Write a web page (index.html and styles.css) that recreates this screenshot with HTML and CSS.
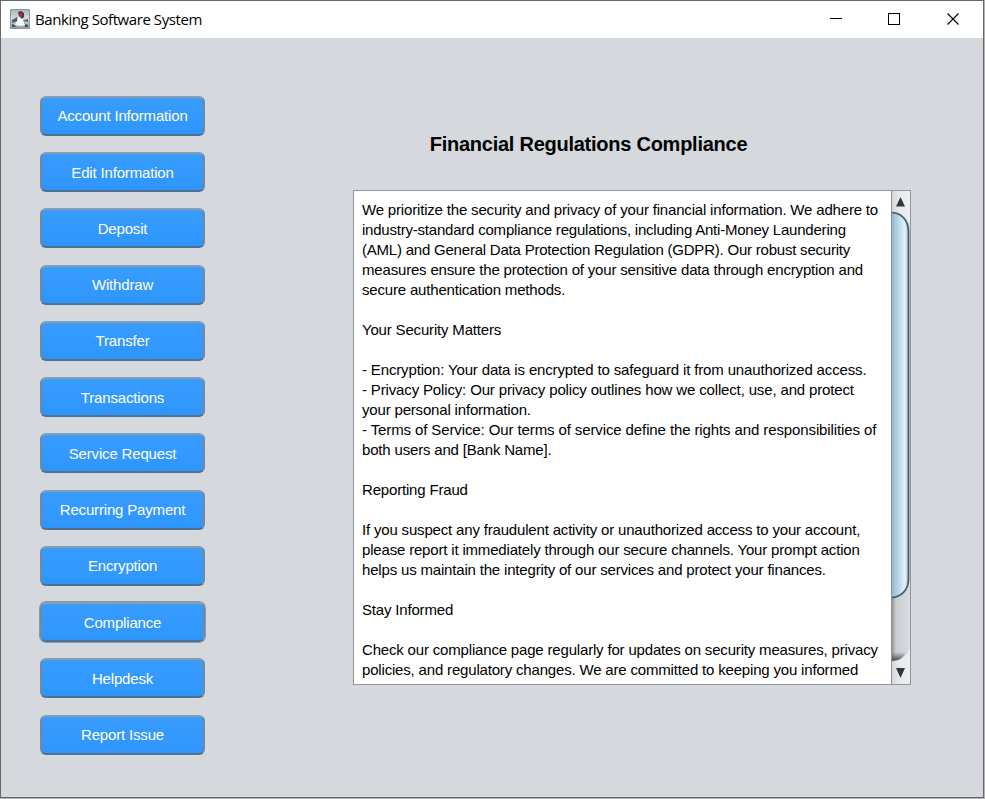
FILE: index.html
```html
<!DOCTYPE html>
<html lang="en">
<head>
<meta charset="utf-8">
<title>Banking Software System</title>
<link rel="stylesheet" href="styles.css">
</head>
<body>
<div class="window">
  <header class="titlebar">
    <svg class="app-icon" width="20" height="20" viewBox="0 0 20 20">
      <defs><linearGradient id="ic" x2="0" y2="1"><stop stop-color="#a9b6bc"/><stop offset=".5" stop-color="#d4dcde"/><stop offset="1" stop-color="#8c9a9f"/></linearGradient></defs>
      <path fill="url(#ic)" stroke="#87969e" d="M.5.5h19v19H.5z"/>
      <path fill="#52636c" d="M2 11l5-3 1 3 6 0 4-1v3l-4-1 1 3-3 1-3-3H5l-3 1z"/>
      <path fill="#f7fafa" d="M8 8l4 1 2 4 1 3-4 1-6-1 2-4z"/>
      <path fill="#55343b" d="M8 3l3-1 3 2v4l-2 2-3-3z"/>
      <path fill="#b8363c" d="M10 4l2 1v3l-2-1z"/>
      <path fill="#3f5059" d="M2 15l4 2-1 1H2zM15 15l3 1v2h-3z"/>
    </svg>
    <span class="title">Banking Software System</span>
    <svg class="controls" width="124" height="14" viewBox="0 0 124 14" fill="none" stroke="#000" shape-rendering="crispEdges">
      <path d="M0 6.500h12M58.500 1.500h11v11h-11z"/>
      <path shape-rendering="auto" stroke-width="1.1" d="M117.500 1.500l11 11m0-11l-11 11"/>
    </svg>
  </header>
  <main class="content">
    <nav class="menu">
      <button>Account Information</button>
      <button>Edit Information</button>
      <button>Deposit</button>
      <button>Withdraw</button>
      <button>Transfer</button>
      <button>Transactions</button>
      <button>Service Request</button>
      <button>Recurring Payment</button>
      <button>Encryption</button>
      <button class="focused">Compliance</button>
      <button>Helpdesk</button>
      <button>Report Issue</button>
    </nav>
    <section class="page">
      <h1>Financial Regulations Compliance</h1>
      <div class="scrollpane">
        <div class="text">We prioritize the security and privacy of your financial information. We adhere to
<span class="tight">industry-standard compliance regulations, including Anti-Money Laundering
(AML) and General Data Protection Regulation (GDPR). Our robust security</span>
measures ensure the protection of your sensitive data through encryption and
secure authentication methods.

Your Security Matters

<span class="loose">- Encryption: Your data is encrypted to safeguard it from unauthorized access.
- Privacy Policy: Our privacy policy outlines how we collect, use, and protect</span>
your personal information.
<span class="looser">- Terms of Service: Our terms of service define the rights and responsibilities of</span>
both users and [Bank Name].

Reporting Fraud

If you suspect any fraudulent activity or unauthorized access to your account,
please report it immediately through our secure channels. Your prompt action
helps us maintain the integrity of our services and protect your finances.

Stay Informed

Check our compliance page regularly for updates on security measures, privacy
policies, and regulatory changes. We are committed to keeping you informed</div>
        <svg class="scrollbar" width="18" height="493" viewBox="0 0 18 493">
          <defs>
            <linearGradient id="track"><stop stop-color="#bfc2c7"/><stop offset=".4" stop-color="#cdd0d5"/><stop offset="1" stop-color="#d8dbe0"/></linearGradient>
            <linearGradient id="thumb"><stop stop-color="#8eabc2"/><stop offset=".25" stop-color="#a9c8df"/><stop offset=".5" stop-color="#c0dbed"/><stop offset=".8" stop-color="#e2f4fc"/><stop offset="1" stop-color="#a5bccb"/></linearGradient>
            <linearGradient id="btn"><stop stop-color="#d5d7da"/><stop offset=".4" stop-color="#e8e9eb"/><stop offset="1" stop-color="#eeeff1"/></linearGradient>
            <linearGradient id="shade" x2="0" y2="1"><stop stop-color="#555" stop-opacity="0"/><stop offset="1" stop-color="#444"/></linearGradient>
            <linearGradient id="side"><stop stop-color="#555"/><stop offset="1" stop-color="#888" stop-opacity="0"/></linearGradient>
          </defs>
          <path fill="url(#track)" d="M0 0h18v493H0z"/>
          <path fill="url(#btn)" d="M0 0h18v36C17 27 10 21 0 21z"/>
          <path fill="url(#side)" d="M0 400h4v70H0z" opacity=".45"/>
          <path fill="url(#shade)" d="M0 461h14q-4 9-14 9z"/>
          <path fill="url(#btn)" d="M0 470c9 0 15-4 18-14v37H0z"/>
          <path fill="url(#thumb)" stroke="#465c6c" stroke-width="1.700" d="M-1 21.500C9 21.500 16.500 29 16.500 41V388C16.500 399 9 406.500-1 406.500z"/>
          <path fill="#343638" d="M8.500 6l4.500 9.500H4zM4 477h9L8.500 487z"/>
        </svg>
      </div>
    </section>
  </main>
</div>
</body>
</html>
```
FILE: styles.css
```css
* { box-sizing: border-box; }
body {
  margin: 0;
  height: 799px;
  overflow: hidden;
  background: #b2b2b2;
  font-family: "Liberation Sans", Arial, sans-serif;
}
.window {
  width: 984px;
  height: 798px;
  border: 1px solid #68686a;
  background: #d5d8dd;
}
.titlebar {
  height: 37px;
  display: flex;
  align-items: center;
  padding: 0 0 1px 9px;
  background: #fff;
}
.app-icon { display: block; }
.title {
  margin-left: 5px;
  font: 15px "Open Sans", "Noto Sans", sans-serif;
  letter-spacing: -0.43px;
}
.controls {
  margin-left: auto;
  margin-right: 29px;
  overflow: visible;
}
.content {
  display: flex;
  padding-left: 39px;
}
.menu {
  display: flex;
  flex-direction: column;
  gap: 16.25px;
  width: 165px;
  padding-top: 57.75px;
}
.menu button {
  height: 40px;
  flex: none;
  padding: 0;
  border: 2px solid;
  border-color: #869eb4 #7089a1 #4f708f;
  border-radius: 6px;
  background: linear-gradient(#389cfb, #3399ff 50%, #2e96fb);
  color: #fff;
  font: 15px "Liberation Sans", Arial, sans-serif;
  letter-spacing: -0.17px;
}
.menu .focused {
  box-shadow: 0 0 0 1px #829caf;
}
.page {
  width: 558px;
  margin-left: 148px;
  padding-top: 93px;
}
h1 {
  margin: 0 0 32px;
  padding-right: 87px;
  text-align: center;
  font-size: 20px;
  line-height: 27px;
  letter-spacing: -0.25px;
  white-space: nowrap;
}
.scrollpane {
  display: flex;
  height: 495px;
  border: 1px solid #9297a1;
  background: #fff;
  overflow: hidden;
}
.text {
  flex: 1;
  min-width: 0;
  padding: 9px 0 0 8px;
  white-space: pre;
  font-size: 15px;
  line-height: 20px;
  letter-spacing: -0.177px;
  color: #000;
}
.tight { letter-spacing: -0.215px; }
.loose { letter-spacing: -0.15px; }
.looser { letter-spacing: -0.11px; }
.scrollbar {
  flex: none;
  width: 19px;
  border-left: 1px solid #8d9299;
}
```
